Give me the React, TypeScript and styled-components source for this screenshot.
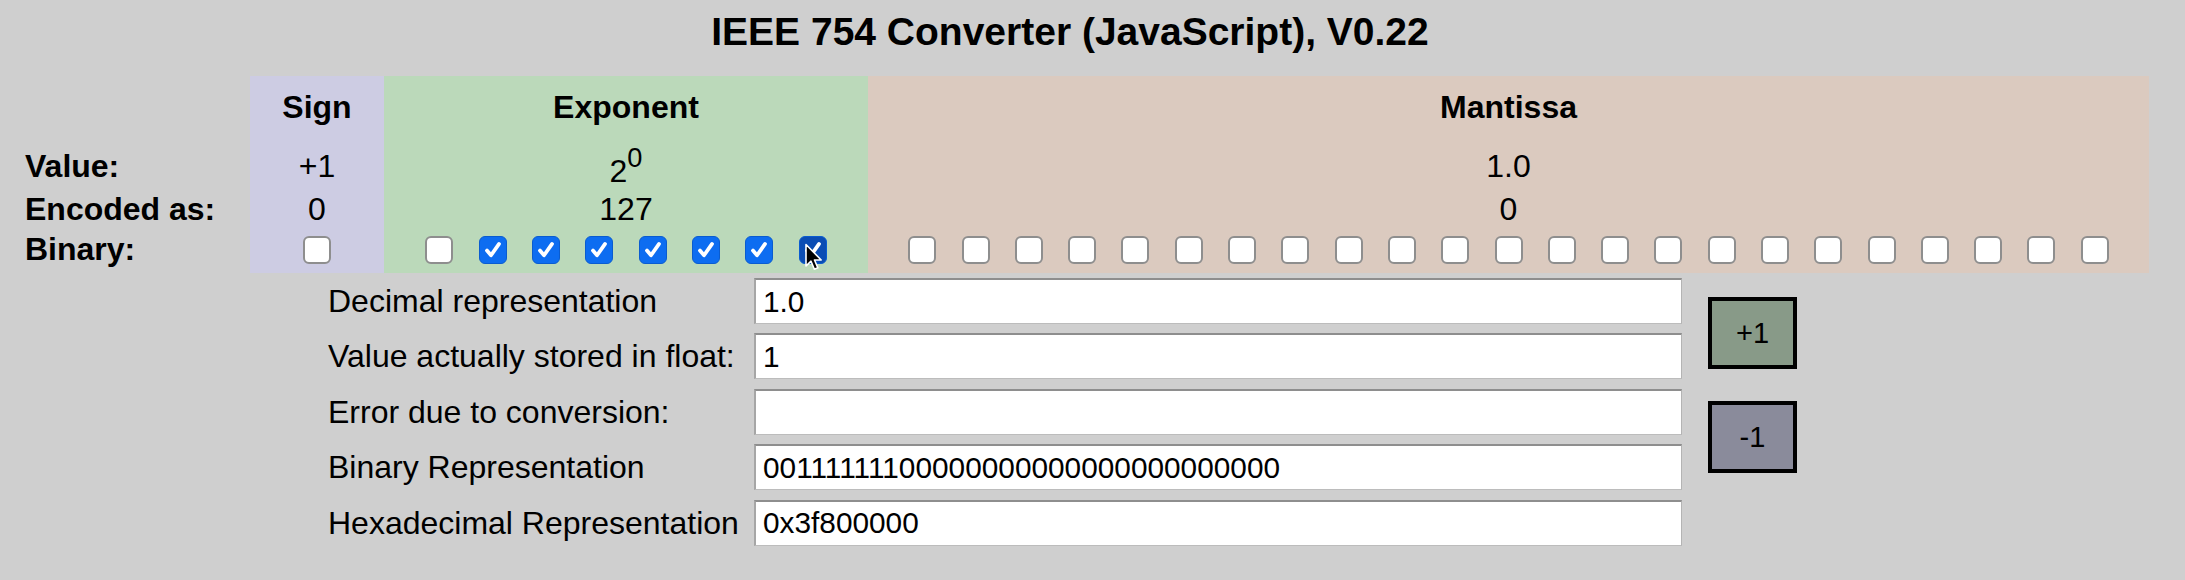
import { Fragment } from "react";
import styled, { createGlobalStyle } from "styled-components";

const GlobalStyle = createGlobalStyle`
  body {
    margin: 0;
    background: #cfcfcf;
    font-family: "Liberation Sans", Arial, Helvetica, sans-serif;
    color: #000;
  }
`;

type Tone = "sign" | "exponent" | "mantissa" | "none";

const toneColors: Record<Tone, string> = {
  sign: "#cdcce3",
  exponent: "#bbd9ba",
  mantissa: "#dbcabf",
  none: "transparent",
};

const Page = styled.div`
  position: relative;
  width: 2185px;
  height: 580px;
  padding-top: 9px;
  box-sizing: border-box;
  overflow: hidden;
`;

const Title = styled.h1`
  width: 2140px;
  margin: 0;
  font-size: 39px;
  line-height: 45px;
  font-weight: bold;
  text-align: center;
`;

const BitTable = styled.div`
  display: grid;
  grid-template-columns: 250px 134px 484px 1281px;
  grid-template-rows: 62px 56px 30px 49px;
  margin-top: 22px;
  font-size: 32px;
  line-height: 32px;
`;

const Cell = styled.div<{ $tone: Tone; $head?: boolean; $label?: boolean }>`
  display: flex;
  align-items: center;
  justify-content: ${(p) => (p.$label ? "flex-start" : "center")};
  padding-left: ${(p) => (p.$label ? "25px" : "0")};
  background: ${(p) => toneColors[p.$tone]};
  font-weight: ${(p) => (p.$head || p.$label ? "bold" : "normal")};
  white-space: nowrap;
`;

const Power = styled.span`
  padding-top: 10px;
`;

const Sup = styled.sup`
  font-size: 0.85em;
  vertical-align: 0.55em;
  line-height: 0;
`;

const BitGroup = styled.div`
  display: flex;
  gap: 25.3px;
  justify-content: center;
  padding-top: 2px;
`;

const BitBox = styled.span<{ $on: boolean; $hot?: boolean }>`
  display: flex;
  align-items: center;
  justify-content: center;
  width: 28px;
  height: 28px;
  box-sizing: border-box;
  border-radius: 6px;
  border: ${(p) => (p.$on ? "1px solid #0a5cd0" : "2px solid #8e8e8e")};
  background: ${(p) => (p.$on ? (p.$hot ? "#0b4db4" : "#0d6df1") : "#fff")};
`;

const Form = styled.div`
  display: flex;
  margin-top: 5px;
  padding-left: 328px;
`;

const Fields = styled.div`
  display: grid;
  grid-template-columns: 426px 928px;
  grid-auto-rows: 46px;
  row-gap: 9.4px;
`;

const FieldLabel = styled.label`
  align-self: center;
  font-size: 32px;
  line-height: 32px;
  white-space: nowrap;
`;

const Field = styled.input`
  width: 100%;
  height: 46px;
  box-sizing: border-box;
  margin: 0;
  padding: 0 0 0 7px;
  background: #fff;
  border-style: solid;
  border-width: 2px 1px 1px 2px;
  border-color: #8e8e8e #b4b4b4 #bcbcbc #a6a6a6;
  font-family: inherit;
  font-size: 29.8px;
  color: #000;
  outline: none;
`;

const ButtonStack = styled.div`
  display: flex;
  flex-direction: column;
  gap: 32px;
  margin-left: 26px;
  padding-top: 19px;
`;

const StepButton = styled.button<{ $bg: string }>`
  width: 89px;
  height: 72px;
  box-sizing: border-box;
  padding: 0;
  border: 4px solid #000;
  background: ${(p) => p.$bg};
  font-family: inherit;
  font-size: 29px;
  color: #000;
`;

const Cursor = styled.svg`
  position: absolute;
  left: 804px;
  top: 243px;
  pointer-events: none;
`;

const signBits = [0];
const exponentBits = [0, 1, 1, 1, 1, 1, 1, 1];
const mantissaBits = Array.from({ length: 23 }, () => 0);

function Bit({ on, hot }: { on: boolean; hot?: boolean }) {
  return (
    <BitBox $on={on} $hot={hot}>
      {on && (
        <svg width="22" height="22" viewBox="0 0 20 20">
          <polyline
            points="4.5,10.5 8.2,14.8 15.5,4.5"
            fill="none"
            stroke="#fff"
            strokeWidth="3.4"
            strokeLinecap="round"
            strokeLinejoin="round"
          />
        </svg>
      )}
    </BitBox>
  );
}

const allBits = [...signBits, ...exponentBits, ...mantissaBits].join("");
const hex = "0x" + parseInt(allBits, 2).toString(16).padStart(8, "0");

const fields = [
  { label: "Decimal representation", value: "1.0" },
  { label: "Value actually stored in float:", value: "1" },
  { label: "Error due to conversion:", value: "" },
  { label: "Binary Representation", value: allBits },
  { label: "Hexadecimal Representation", value: hex },
];

export default function App() {
  return (
    <Page>
      <GlobalStyle />
      <Title>IEEE 754 Converter (JavaScript), V0.22</Title>

      <BitTable>
        <Cell $tone="none" />
        <Cell $tone="sign" $head>Sign</Cell>
        <Cell $tone="exponent" $head>Exponent</Cell>
        <Cell $tone="mantissa" $head>Mantissa</Cell>

        <Cell $tone="none" $label>Value:</Cell>
        <Cell $tone="sign">+1</Cell>
        <Cell $tone="exponent">
          <Power>
            2<Sup>0</Sup>
          </Power>
        </Cell>
        <Cell $tone="mantissa">1.0</Cell>

        <Cell $tone="none" $label>Encoded as:</Cell>
        <Cell $tone="sign">0</Cell>
        <Cell $tone="exponent">127</Cell>
        <Cell $tone="mantissa">0</Cell>

        <Cell $tone="none" $label>Binary:</Cell>
        <Cell $tone="sign">
          <BitGroup>
            {signBits.map((b, i) => (
              <Bit key={i} on={b === 1} />
            ))}
          </BitGroup>
        </Cell>
        <Cell $tone="exponent">
          <BitGroup>
            {exponentBits.map((b, i) => (
              <Bit key={i} on={b === 1} hot={i === exponentBits.length - 1} />
            ))}
          </BitGroup>
        </Cell>
        <Cell $tone="mantissa">
          <BitGroup>
            {mantissaBits.map((b, i) => (
              <Bit key={i} on={b === 1} />
            ))}
          </BitGroup>
        </Cell>
      </BitTable>

      <Form>
        <Fields>
          {fields.map((f) => (
            <Fragment key={f.label}>
              <FieldLabel>{f.label}</FieldLabel>
              <Field value={f.value} readOnly />
            </Fragment>
          ))}
        </Fields>
        <ButtonStack>
          <StepButton $bg="#889a88">+1</StepButton>
          <StepButton $bg="#8a8b9b">-1</StepButton>
        </ButtonStack>
      </Form>

      <Cursor width="20" height="30" viewBox="0 0 20 30">
        <path
          d="M2 1.5 L2 23 L7 18.2 L10.4 26.2 L13.8 24.8 L10.5 17 L17.2 17 Z"
          fill="#000"
          stroke="#fff"
          strokeWidth="1.6"
          strokeLinejoin="round"
        />
      </Cursor>
    </Page>
  );
}
